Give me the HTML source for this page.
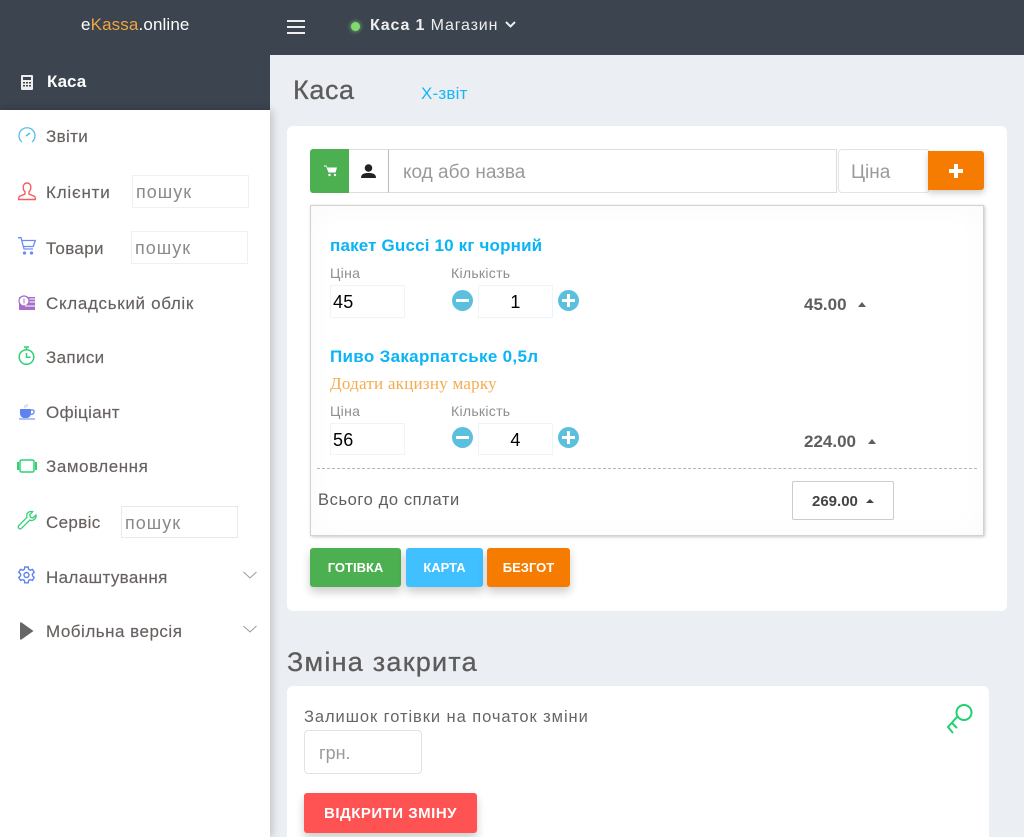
<!DOCTYPE html>
<html><head><meta charset="utf-8"><style>
*{box-sizing:border-box}
html,body{margin:0;padding:0;width:1024px;height:837px;overflow:hidden}
#w{width:1024px;height:837px;overflow:hidden;position:relative;background:#ebeef2;font-family:"Liberation Sans",sans-serif;color:#5e5e5e}
.a{position:absolute;white-space:nowrap;line-height:1}
.box{position:absolute;background:#fff}
svg{position:absolute;overflow:visible}
.s{font-size:17px;color:#66615f;letter-spacing:.35px;-webkit-text-stroke:.15px #66615f}
.ph{font-size:18px;color:#8a8a8a;letter-spacing:1px}
.in{position:absolute;background:#fff;border:1px solid #eef4fb}
.btn{position:absolute;border-radius:3px;color:#fff;font-weight:700;font-size:13px;text-align:center;box-shadow:0 5px 9px rgba(0,0,0,.2)}
.n{font-size:18px;color:#000;letter-spacing:.3px}
.lb{font-size:14px;color:#8e8e8e;letter-spacing:.3px}
.t{font-size:17px;font-weight:700;color:#0ab4f5}
.tr{width:0;height:0;border-left:4.5px solid transparent;border-right:4.5px solid transparent;border-bottom:5px solid #5e5e5e;position:absolute}
</style></head><body><div id="w">
<!-- top -->
<div class="box" style="left:0;top:0;width:1024px;height:55px;background:#3b444f"></div>
<div class="box" style="left:0;top:55px;width:270px;height:55px;background:#3b444f"></div>
<div class="box" style="left:0;top:110px;width:270px;height:727px;box-shadow:2px 0 8px rgba(0,0,0,.2)"></div>
<div class="a" style="left:81px;top:16px;font-size:17px;color:#fff;letter-spacing:.13px">e<span style="color:#f0a63e">Kassa</span>.online</div>
<div class="box" style="left:287px;top:20px;width:18px;height:2px;background:#eee"></div>
<div class="box" style="left:287px;top:26px;width:18px;height:2px;background:#eee"></div>
<div class="box" style="left:287px;top:32px;width:18px;height:2px;background:#eee"></div>
<div class="box" style="left:351px;top:22px;width:9px;height:9px;border-radius:50%;background:#82d96e;box-shadow:0 0 5px #82d96e"></div>
<div class="a" style="left:370px;top:18px;font-size:16px;color:#eee;letter-spacing:.85px"><b>Каса 1</b> Магазин</div>
<svg style="left:0;top:0" width="1" height="1"><path d="M506 22l4.500 4.500 4.500-4.500" fill="none" stroke="#eee" stroke-width="2"/></svg>

<!-- sidebar -->
<svg style="left:21px;top:75px" width="12" height="15"><rect x="0" y="0" width="12" height="15" rx="1" fill="#eee"/><rect x="2" y="2" width="8" height="3" fill="#3b444f"/><path d="M2 7h2v1.500H2zM5 7h2v1.500H5zM8 7h2v1.500H8zM2 10h2v1.500H2zM5 10h2v1.500H5zM8 10h2v1.500H8z" fill="#3b444f"/></svg>
<div class="a" style="left:47px;top:73px;font-size:17px;font-weight:700;color:#fff">Каса</div>

<svg style="left:18px;top:126px" width="18" height="18" fill="none"><path d="M4 16A8 8 0 1 1 14 16" stroke="#55bde8" stroke-width="1.300"/><path d="M8 10l4-3" stroke="#55bde8" stroke-width="1.500"/></svg>
<div class="a s" style="left:46px;top:128px">Звіти</div>

<svg style="left:18px;top:182px" width="18" height="19" fill="none" stroke="#fb5a5e" stroke-width="1.400"><path d="M9 1c2.500 0 3.800 2 3.800 4.200 0 2-.8 3.700-1.800 4.600v2.200l5.500 2.400c.7.400.8 2 .8 3.100H.7c0-1.100.1-2.700.8-3.100L7 12V9.800C6 8.900 5.200 7.200 5.200 5.200 5.200 3 6.500 1 9 1z"/></svg>
<div class="a s" style="left:46px;top:184px;letter-spacing:.8px">Клієнти</div>
<div class="in" style="left:132px;top:175px;width:117px;height:33px;border-color:#f0f0f0"></div>
<div class="a ph" style="left:136px;top:183px">пошук</div>

<svg style="left:18px;top:237px" width="18" height="18" fill="none" stroke="#6c8cf5" stroke-width="1.300"><path d="M0 .7h3l3 11.300h9M3.800 3.500h13.500l-2 6H5.500"/><circle cx="6.500" cy="16" r="1" fill="#6c8cf5"/><circle cx="13.500" cy="16" r="1" fill="#6c8cf5"/></svg>
<div class="a s" style="left:46px;top:240px">Товари</div>
<div class="in" style="left:131px;top:231px;width:117px;height:33px;border-color:#f0f0f0"></div>
<div class="a ph" style="left:135px;top:239px">пошук</div>

<svg style="left:18px;top:295px" width="17" height="16"><rect x="1" y="2" width="16" height="13" fill="#a86cc9"/><circle cx="6" cy="6" r="5" fill="#fff" stroke="#a86cc9" stroke-width="1.200"/><path d="M11.500 4h5.500M11.500 7h5.500M7 11h10" stroke="#fff"/><path d="M6 3.500v5" stroke="#a86cc9"/></svg>
<div class="a s" style="left:46px;top:295px;letter-spacing:.67px">Складський облік</div>

<svg style="left:18px;top:346px" width="17" height="19" fill="none" stroke="#2fd277" stroke-width="1.500"><circle cx="8.500" cy="11" r="7.300"/><path d="M6 1h5M8.500 1v2.500M8.500 7v4.300h4"/></svg>
<div class="a s" style="left:46px;top:349px">Записи</div>

<svg style="left:19px;top:404px" width="17" height="16"><path d="M1 5h11v4c0 3-2 5-4 5H5c-2 0-4-2-4-5z" fill="#5f82ee"/><path d="M12 6h2c1.800 0 1.800 4-2 4.500" fill="none" stroke="#5f82ee" stroke-width="1.200"/><path d="M0 15h16" stroke="#5f82ee"/><path d="M6 1v3M8 0v3" stroke="#b4c4f5"/></svg>
<div class="a s" style="left:46px;top:404px">Офіціант</div>

<svg style="left:17px;top:459px" width="20" height="14" fill="none" stroke="#2fd277"><rect x="3" y="1" width="14" height="12" rx="1.500" stroke-width="1.500"/><path d="M1 3v8M19 3v8" stroke-width="2"/></svg>
<div class="a s" style="left:46px;top:458px;letter-spacing:.55px">Замовлення</div>

<svg style="left:18px;top:511px" width="19" height="19" fill="none" stroke="#2fd277" stroke-width="1.300"><path d="M18 4l-3 3-2.500-.8L11.700 3.700 14.700.7C11.700-.3 8.700 1.700 8.700 4.700c0 .7.100 1.200.3 1.700L1 14.300c-1 1-1 2.200-.2 3s2 .8 3-.2l8-8c3.300 1.200 7-1.500 6.200-5.100z"/></svg>
<div class="a s" style="left:46px;top:514px">Сервіс</div>
<div class="in" style="left:121px;top:506px;width:117px;height:32px;border-color:#e9e9e9"></div>
<div class="a ph" style="left:125px;top:514px">пошук</div>

<svg style="left:18px;top:566px" width="17" height="18" fill="none" stroke="#5f82ee" stroke-width="1.400"><path d="M6.800 1h3.400l.5 2.400 1.500.8 2.300-.8 1.700 3-1.800 1.600v1.800l1.800 1.600-1.700 3-2.300-.8-1.500.8-.5 2.400H6.800l-.5-2.400-1.500-.8-2.300.8-1.700-3 1.800-1.600V8l-1.800-1.600 1.700-3 2.300.8 1.500-.8z"/><circle cx="8.500" cy="9" r="2.500"/></svg>
<div class="a s" style="left:46px;top:569px">Налаштування</div>
<svg style="left:243px;top:571px" width="14" height="8" fill="none" stroke="#9a9a9a"><path d="M.5 1l6.500 6 6.500-6"/></svg>

<svg style="left:20px;top:622px" width="14" height="18"><path d="M0 1.500C0 .5 .7 0 1.500 .5L13.500 9 1.500 17.500C.7 18 0 17.500 0 16.500z" fill="#666"/></svg>
<div class="a s" style="left:46px;top:623px;letter-spacing:.5px">Мобільна версія</div>
<svg style="left:243px;top:625px" width="14" height="8" fill="none" stroke="#9a9a9a"><path d="M.5 1l6.500 6 6.500-6"/></svg>

<!-- header -->
<div class="a" style="left:293px;top:77px;font-size:27px;color:#5c5c5c;letter-spacing:.6px;-webkit-text-stroke:.3px #5c5c5c">Каса</div>
<div class="a" style="left:421px;top:85px;font-size:17px;color:#16b5f7;letter-spacing:.2px">Х-звіт</div>

<!-- card 1 -->
<div class="box" style="left:287px;top:126px;width:720px;height:485px;border-radius:6px"></div>
<div class="box" style="left:310px;top:149px;width:39px;height:44px;background:#4caf50;border-radius:3px 0 0 3px"></div>
<svg style="left:324px;top:165px" width="13" height="12"><path d="M0 .5h2.500l.5 2h10l-1.500 5H4.500L2 1.500H0z" fill="#fff"/><circle cx="5.500" cy="10" r="1.200" fill="#fff"/><circle cx="11" cy="10" r="1.200" fill="#fff"/></svg>
<div class="box" style="left:349px;top:149px;width:40px;height:44px;border:1px solid #ddd;border-left:none;border-right-color:#bbb"></div>
<svg style="left:361px;top:164px" width="15" height="14"><circle cx="7.500" cy="4" r="3.800" fill="#222"/><path d="M0 14c0-4 3-5 7.500-5s7.500 1 7.500 5z" fill="#222"/></svg>
<div class="box" style="left:389px;top:149px;width:448px;height:44px;border:1px solid #ddd;border-left:none"></div>
<div class="a" style="left:403px;top:163px;font-size:19px;color:#9a9a9a;letter-spacing:0">код або назва</div>
<div class="box" style="left:838px;top:149px;width:92px;height:44px;border:1px solid #e3e3e3;border-radius:4px"></div>
<div class="a" style="left:851px;top:163px;font-size:19px;color:#9a9a9a">Ціна</div>
<div class="box" style="left:928px;top:151px;width:56px;height:39px;background:#f57c00;border-radius:0 3px 3px 0;box-shadow:0 3px 7px rgba(0,0,0,.2)"></div>
<svg style="left:948px;top:163px" width="16" height="16"><path d="M8 1v14M1 8h14" stroke="#fff" stroke-width="4"/></svg>

<!-- list -->
<div class="box" style="left:310px;top:205px;width:674px;height:331px;border:1px solid #d2d2d2;box-shadow:1px 1px 3px rgba(0,0,0,.22),inset 0 0 30px rgba(0,0,0,.025)"></div>

<div class="a t" style="left:330px;top:237px;letter-spacing:.17px">пакет Gucci 10 кг чорний</div>
<div class="a lb" style="left:330px;top:266px">Ціна</div>
<div class="a lb" style="left:451px;top:266px">Кількість</div>
<div class="in" style="left:330px;top:285px;width:75px;height:33px"></div>
<div class="a n" style="left:333px;top:293px">45</div>
<svg style="left:452px;top:290px" width="21" height="21"><circle cx="10.500" cy="10.500" r="10.500" fill="#5bc0de"/><path d="M4 10.500h13" stroke="#fff" stroke-width="3"/></svg>
<div class="in" style="left:478px;top:285px;width:75px;height:33px"></div>
<div class="a n" style="left:478px;width:75px;text-align:center;top:293px">1</div>
<svg style="left:558px;top:290px" width="21" height="21"><circle cx="10.500" cy="10.500" r="10.500" fill="#5bc0de"/><path d="M4 10.500h13M10.500 4v13" stroke="#fff" stroke-width="3"/></svg>
<div class="a" style="left:804px;top:296px;font-size:17px;font-weight:700;color:#5e5e5e">45.00</div>
<div class="tr" style="left:858px;top:302px"></div>

<div class="a t" style="left:330px;top:348px;letter-spacing:.32px">Пиво Закарпатське 0,5л</div>
<div class="a" style="left:330px;top:375px;font-family:'Liberation Serif',serif;font-size:17px;color:#f5ab50;letter-spacing:.25px">Додати акцизну марку</div>
<div class="a lb" style="left:330px;top:404px">Ціна</div>
<div class="a lb" style="left:451px;top:404px">Кількість</div>
<div class="in" style="left:330px;top:423px;width:75px;height:32px"></div>
<div class="a n" style="left:333px;top:431px">56</div>
<svg style="left:452px;top:427px" width="21" height="21"><circle cx="10.500" cy="10.500" r="10.500" fill="#5bc0de"/><path d="M4 10.500h13" stroke="#fff" stroke-width="3"/></svg>
<div class="in" style="left:478px;top:423px;width:75px;height:32px"></div>
<div class="a n" style="left:478px;width:75px;text-align:center;top:431px">4</div>
<svg style="left:558px;top:427px" width="21" height="21"><circle cx="10.500" cy="10.500" r="10.500" fill="#5bc0de"/><path d="M4 10.500h13M10.500 4v13" stroke="#fff" stroke-width="3"/></svg>
<div class="a" style="left:804px;top:433px;font-size:17px;font-weight:700;color:#5e5e5e">224.00</div>
<div class="tr" style="left:868px;top:439px"></div>

<div class="box" style="left:317px;top:468px;width:660px;height:0;border-top:1px dashed #b5b5b5"></div>
<div class="a" style="left:318px;top:492px;font-size:16.500px;color:#5e5e5e;letter-spacing:.6px">Всього до сплати</div>
<div class="box" style="left:792px;top:481px;width:102px;height:39px;border:1px solid #ccc;border-radius:2px"></div>
<div class="a" style="left:812px;top:494px;font-size:15px;font-weight:700;color:#444">269.00</div>
<div class="tr" style="left:866px;top:499px;border-left-width:4px;border-right-width:4px;border-bottom-width:4px;border-bottom-color:#444"></div>

<div class="btn" style="left:310px;top:548px;width:91px;height:39px;background:#4caf50;line-height:40px">ГОТІВКА</div>
<div class="btn" style="left:406px;top:548px;width:77px;height:39px;background:#40c0ff;line-height:40px">КАРТА</div>
<div class="btn" style="left:487px;top:548px;width:83px;height:39px;background:#f57c00;line-height:40px">БЕЗГОТ</div>

<!-- card 2 -->
<div class="a" style="left:287px;top:649px;font-size:27px;color:#5c5c5c;letter-spacing:1.25px;-webkit-text-stroke:.3px #5c5c5c">Зміна закрита</div>
<div class="box" style="left:287px;top:686px;width:702px;height:170px;border-radius:6px"></div>
<div class="a" style="left:304px;top:709px;font-size:16.500px;color:#666;letter-spacing:.93px">Залишок готівки на початок зміни</div>
<div class="box" style="left:304px;top:730px;width:118px;height:44px;border:1px solid #e3e3e3;border-radius:4px"></div>
<div class="a" style="left:319px;top:744px;font-size:18px;color:#9a9a9a">грн.</div>
<div class="btn" style="left:304px;top:793px;width:173px;height:40px;background:#ff5252;font-size:15px;line-height:41px;letter-spacing:.5px">ВІДКРИТИ ЗМІНУ</div>
<svg style="left:946px;top:702px" width="29" height="33" fill="none" stroke="#1fd16f" stroke-width="2"><circle cx="18" cy="10.500" r="7.500"/><path d="M11 15L2 25l5 6M6 21l5 5"/></svg>
</div></body></html>
